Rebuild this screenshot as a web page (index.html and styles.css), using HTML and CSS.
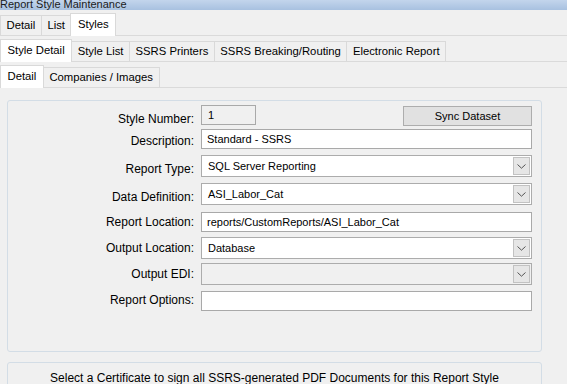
FILE: index.html
```html
<!DOCTYPE html>
<html>
<head>
<meta charset="utf-8">
<title>Report Style Maintenance</title>
<link rel="stylesheet" href="styles.css">
</head>
<body>
<div class="titlebar"><span class="title">Report Style Maintenance</span></div>

<div class="tabstrip">
  <div class="tab">Detail</div>
  <div class="tab">List</div>
  <div class="tab active">Styles</div>
</div>
<div class="tabstrip">
  <div class="tab active">Style Detail</div>
  <div class="tab">Style List</div>
  <div class="tab">SSRS Printers</div>
  <div class="tab">SSRS Breaking/Routing</div>
  <div class="tab">Electronic Report</div>
</div>
<div class="tabstrip">
  <div class="tab active">Detail</div>
  <div class="tab">Companies / Images</div>
</div>

<div class="content">
  <div class="group main">
    <div class="form">
      <div class="lbl off7">Style Number:</div>
      <div class="ctl first">
        <div class="field readonly num">1</div>
        <div class="button">Sync Dataset</div>
      </div>

      <div class="lbl off5">Description:</div>
      <div class="ctl"><div class="field">Standard - SSRS</div></div>

      <div class="lbl off7">Report Type:</div>
      <div class="ctl"><div class="combo"><span class="ctext">SQL Server Reporting</span><span class="dd"><svg width="9" height="5" viewBox="0 0 9 5"><path d="M0.5 0.5 L4.5 4.2 L8.5 0.5" fill="none" stroke="#555" stroke-width="1"/></svg></span></div></div>

      <div class="lbl off7">Data Definition:</div>
      <div class="ctl"><div class="combo"><span class="ctext">ASI_Labor_Cat</span><span class="dd"><svg width="9" height="5" viewBox="0 0 9 5"><path d="M0.5 0.5 L4.5 4.2 L8.5 0.5" fill="none" stroke="#555" stroke-width="1"/></svg></span></div></div>

      <div class="lbl off3">Report Location:</div>
      <div class="ctl"><div class="field">reports/CustomReports/ASI_Labor_Cat</div></div>

      <div class="lbl off4">Output Location:</div>
      <div class="ctl"><div class="combo"><span class="ctext">Database</span><span class="dd"><svg width="9" height="5" viewBox="0 0 9 5"><path d="M0.5 0.5 L4.5 4.2 L8.5 0.5" fill="none" stroke="#555" stroke-width="1"/></svg></span></div></div>

      <div class="lbl off4">Output EDI:</div>
      <div class="ctl"><div class="combo disabled"><span class="ctext"></span><span class="dd"><svg width="9" height="5" viewBox="0 0 9 5"><path d="M0.5 0.5 L4.5 4.2 L8.5 0.5" fill="none" stroke="#555" stroke-width="1"/></svg></span></div></div>

      <div class="lbl off2">Report Options:</div>
      <div class="ctl"><div class="field"></div></div>
    </div>
  </div>

  <div class="group cert">
    <p class="cert-text">Select a Certificate to sign all SSRS-generated PDF Documents for this Report Style</p>
  </div>
</div>
</body>
</html>
```

FILE: styles.css
```css
html, body {
  margin: 0;
  padding: 0;
}
body {
  width: 567px;
  height: 384px;
  overflow: hidden;
  background: #f0f0f0;
  font-family: "Liberation Sans", Arial, sans-serif;
  color: #000;
}

.titlebar {
  height: 10px;
  overflow: hidden;
  background: linear-gradient(to bottom, #c3d5ec, #a8c1e0);
}
.title {
  display: block;
  font-size: 11px;
  line-height: 12px;
  margin-top: -2px;
  color: #1b1b1b;
}

.tabstrip {
  display: flex;
  align-items: flex-end;
  height: 25px;
  border-bottom: 1px solid #dadada;
}
.tab {
  height: 19px;
  line-height: 19px;
  padding: 0 5.5px;
  border: 1px solid #d9d9d9;
  border-bottom: none;
  margin-left: -1px;
  font-size: 11.3px;
  background: #f0f0f0;
  white-space: nowrap;
}
.tab:first-child {
  margin-left: 0;
}
.tab.active {
  height: 22px;
  line-height: 20px;
  padding: 0 6.5px;
  background: #fff;
  margin-bottom: -1px;
  position: relative;
  z-index: 1;
}

.content {
  padding: 12px 25px 0 7px;
}
.group {
  border: 1px solid #d3dde6;
  border-radius: 3px;
  box-sizing: border-box;
}
.main {
  height: 252px;
}
.form {
  display: grid;
  grid-template-columns: 186px 1fr;
  grid-template-rows: 24px 26px 28px 29px 25px 26px 28px 20px;
  column-gap: 7px;
  padding: 4px 9px 0 0;
}
.lbl {
  text-align: right;
  font-size: 12px;
  line-height: 14px;
  white-space: nowrap;
}
.off7 { padding-top: 7px; }
.off5 { padding-top: 5px; }
.off4 { padding-top: 4px; }
.off3 { padding-top: 3px; }
.off2 { padding-top: 2px; }

.ctl {
  display: flex;
  align-items: flex-start;
}
.field {
  box-sizing: border-box;
  flex: 1;
  height: 20px;
  border: 1px solid #a9a9a9;
  background: #fff;
  font-size: 11px;
  line-height: 18px;
  padding-left: 5px;
  white-space: nowrap;
}
.field.readonly {
  background: #f0f0f0;
}
.field.num {
  flex: 0 0 55px;
  padding-left: 6px;
}
.button {
  box-sizing: border-box;
  margin-left: auto;
  margin-top: 1px;
  width: 129px;
  height: 20px;
  border: 1px solid #adadad;
  background: #e1e1e1;
  font-size: 11px;
  line-height: 18px;
  text-align: center;
}

.combo {
  box-sizing: border-box;
  flex: 1;
  display: flex;
  height: 22px;
  border: 1px solid #acacac;
  padding: 1px;
  background: #fff;
}
.combo.disabled {
  background: #f0f0f0;
}
.ctext {
  flex: 1;
  font-size: 11px;
  line-height: 18px;
  padding-left: 5px;
  white-space: nowrap;
}
.dd {
  box-sizing: border-box;
  width: 17px;
  height: 18px;
  border: 1px solid #c2c2c2;
  background: #e6e6e6;
  display: flex;
  align-items: center;
  justify-content: center;
}
.dd svg {
  display: block;
}

.cert {
  margin-top: 10px;
  height: 40px;
}
.cert-text {
  margin: 0;
  padding-top: 8px;
  text-align: center;
  font-size: 12px;
  line-height: 14px;
}
```
